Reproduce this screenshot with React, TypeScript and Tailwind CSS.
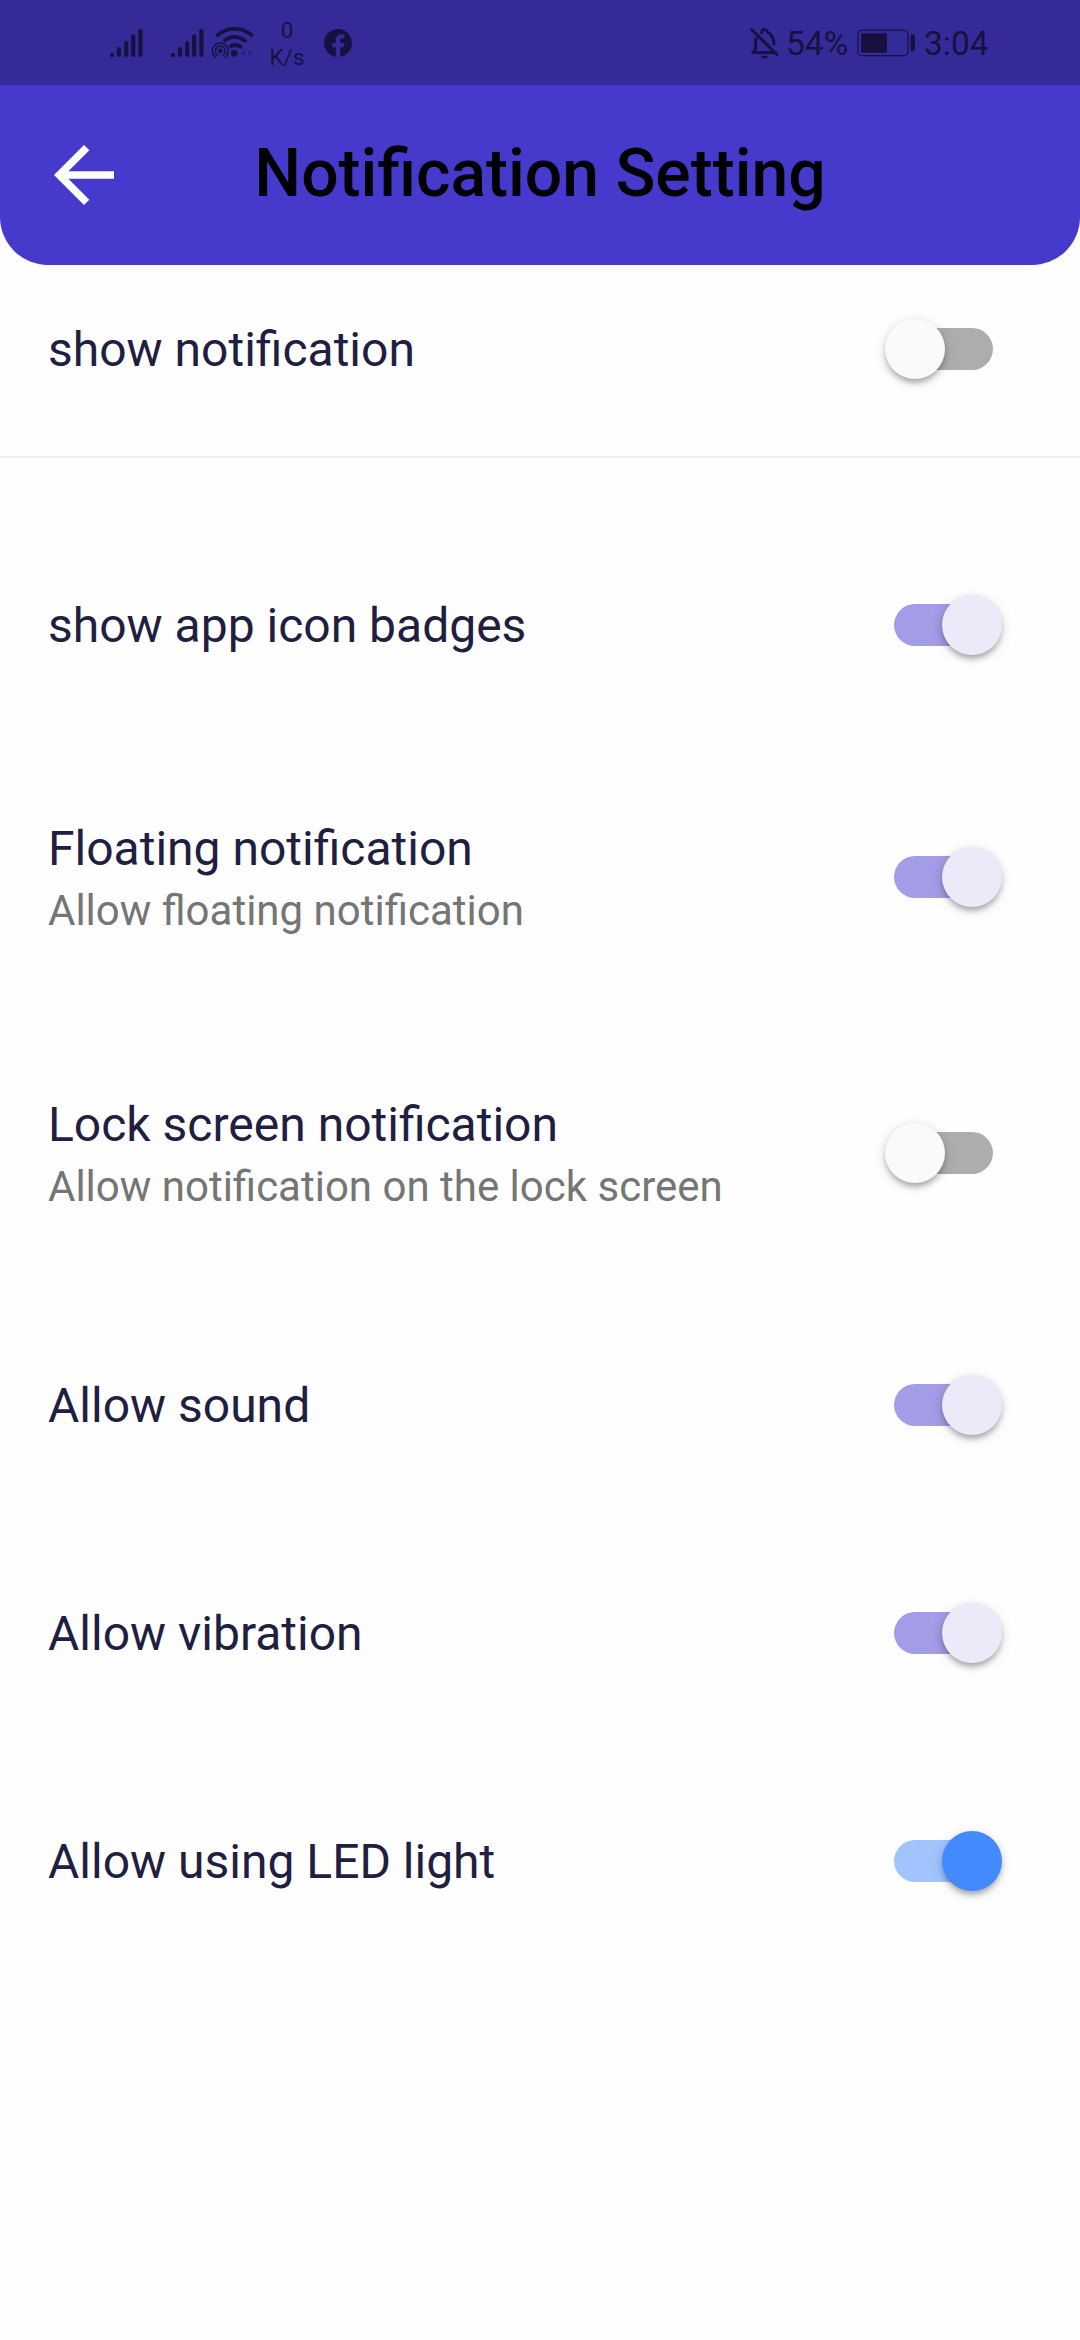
import React from "react";

const INK = "#18113f";

function SignalBars() {
  return (
    <svg width="34" height="34" viewBox="0 0 34 34" stroke={INK} strokeWidth="4.2" strokeLinecap="round">
      <path d="M3 29.2v-.4M10 29V23M17.2 29V16.8M24.2 29V10.4M31.4 29V4.8" />
    </svg>
  );
}

function WifiHotspot() {
  return (
    <svg width="50" height="44" viewBox="0 0 50 44" fill="none" stroke={INK} strokeLinecap="round">
      <path d="M7.6 14Q24.5 1.2 41.6 14" strokeWidth="3.8" />
      <path d="M14.8 19.2Q24.5 12.2 35 19.7" strokeWidth="3.8" />
      <path d="M21 25.200Q25.500 22.600 30.500 25.700" strokeWidth="3.8" />
      <circle cx="24.300" cy="32.300" r="3.400" fill={INK} stroke="none" />
      <circle cx="10.300" cy="30" r="2.200" fill={INK} stroke="none" />
      <path d="M7.500 34.100a5 5 0 1 1 5.600 0" strokeWidth="1.500" />
      <path d="M5.300 36.200a8 8 0 1 1 10 0" strokeWidth="1.500" />
      <path d="M35 28.500v7.500l-4.500-3.700zM38.300 28.500v7.500l4.500-3.700z" fill="#292181" stroke="none" />
    </svg>
  );
}

function FacebookBadge() {
  return (
    <svg width="28" height="28" viewBox="0 0 24 24">
      <path
        fill={INK}
        d="M24 12.073c0-6.627-5.373-12-12-12s-12 5.373-12 12c0 5.990 4.388 10.954 10.125 11.854v-8.385H7.078v-3.470h3.047V9.430c0-3.007 1.792-4.669 4.533-4.669 1.312 0 2.686.235 2.686.235v2.953H15.830c-1.491 0-1.956.925-1.956 1.874v2.250h3.328l-.532 3.470h-2.796v8.385C19.612 23.027 24 18.062 24 12.073z"
      />
    </svg>
  );
}

function BellOff() {
  return (
    <svg width="30" height="34" viewBox="0 0 30 34" fill="none" stroke={INK} strokeWidth="3">
      <path d="M6.200 11.500C5.500 14 5.500 16 5.500 23.500L3 26.500H25" strokeLinejoin="round" />
      <path d="M10.500 7.500C12 6.500 12 6 12.500 4.500a2.500 2.500 0 0 1 4 0C17 6.500 18 7 20 8c3 2.500 4 5 4 11" />
      <path d="M1.500 3.500L27 28.500" strokeLinecap="round" />
      <path d="M11 29.700h7a3.500 2.600 0 0 1-7 0z" fill={INK} stroke="none" />
    </svg>
  );
}

function Battery() {
  return (
    <svg width="60" height="30" viewBox="0 0 60 30">
      <rect x="1.900" y="2.200" width="50" height="25.500" rx="4" fill="none" stroke={INK} strokeWidth="1.300" />
      <rect x="5" y="5.200" width="26" height="19.500" rx="1" fill={INK} />
      <rect x="54.500" y="6.500" width="4.500" height="17" rx="2" fill={INK} />
    </svg>
  );
}

function StatusBar() {
  return (
    <div className="flex h-[85px] items-center bg-[#342b99] text-[#18113f]">
      <div className="ml-[109px] h-[34px]"><SignalBars /></div>
      <div className="ml-[27px] h-[34px]"><SignalBars /></div>
      <div className="ml-[6px] h-[44px]"><WifiHotspot /></div>
      <div className="ml-[8px] w-[38px] pt-[2px] text-center text-[22.5px] leading-[27px]">
        <div>0</div>
        <div>K/s</div>
      </div>
      <div className="ml-[18px] h-[28px]"><FacebookBadge /></div>
      <div className="ml-auto h-[34px]"><BellOff /></div>
      <div className="ml-[6px] w-[62px] pt-[2px] text-[33.5px] leading-[40px]">54%</div>
      <div className="ml-[8px] h-[30px]"><Battery /></div>
      <div className="mr-[90px] ml-[8px] w-[66px] pt-[2px] text-[33.5px] leading-[40px]">3:04</div>
    </div>
  );
}

function Header() {
  return (
    <header className="flex h-[180px] items-center rounded-b-[48px] bg-[#463acd]">
      <div className="w-[168px] pl-[39px]">
        <svg width="90" height="90" viewBox="0 0 24 24" fill="#fff">
          <path d="M20 11H7.830l5.590-5.590L12 4l-8 8 8 8 1.410-1.410L7.830 13H20v-2z" />
        </svg>
      </div>
      <h1 className="flex-1 pb-[2px] text-center text-[66px] leading-[78px] font-medium text-black">
        Notification Setting
      </h1>
      <div className="w-[168px]" />
    </header>
  );
}

type Tone = "off" | "violet" | "blue";

const TRACK: Record<Tone, string> = {
  off: "bg-[#adadad]",
  violet: "bg-[#a39ce6]",
  blue: "bg-[#a1c4ff]",
};

const THUMB: Record<Tone, string> = {
  off: "-left-[9px] bg-[#fafafa]",
  violet: "left-[48px] bg-[#ebeaf8]",
  blue: "left-[48px] bg-[#448aff]",
};

function Toggle({ tone }: { tone: Tone }) {
  return (
    <div className={"relative h-[42px] w-[99px] rounded-full " + TRACK[tone]}>
      <div
        className={
          "absolute -top-[9px] size-[60px] rounded-full shadow-[0_6px_6px_-3px_rgba(0,0,0,0.2),0_3px_6px_0_rgba(0,0,0,0.14),0_3px_13px_0_rgba(0,0,0,0.12)] " +
          THUMB[tone]
        }
      />
    </div>
  );
}

function Row({ title, subtitle, tone }: { title: string; subtitle?: string; tone: Tone }) {
  return (
    <div className={"flex items-center justify-between pr-[87px] pl-[48px] " + (subtitle ? "h-[216px]" : "h-[168px]")}>
      <div className="pt-[2px]">
        <div className="text-[48px] leading-[56px] text-[#1f2041]">{title}</div>
        {subtitle && <div className="mt-[9px] text-[42px] leading-[50px] text-[#757575]">{subtitle}</div>}
      </div>
      <Toggle tone={tone} />
    </div>
  );
}

export default function App() {
  return (
    <div className="min-h-[2340px] w-[1080px] bg-[#fefefe] font-['Roboto',sans-serif]">
      <StatusBar />
      <Header />
      <Row title="show notification" tone="off" />
      <div className="flex h-[48px] items-center">
        <div className="h-[2px] w-full bg-[#eeeeee]" />
      </div>
      <div className="flex flex-col gap-[60px] pt-[60px]">
        <Row title="show app icon badges" tone="violet" />
        <Row title="Floating notification" subtitle="Allow floating notification" tone="violet" />
        <Row title="Lock screen notification" subtitle="Allow notification on the lock screen" tone="off" />
        <Row title="Allow sound" tone="violet" />
        <Row title="Allow vibration" tone="violet" />
        <Row title="Allow using LED light" tone="blue" />
      </div>
    </div>
  );
}
